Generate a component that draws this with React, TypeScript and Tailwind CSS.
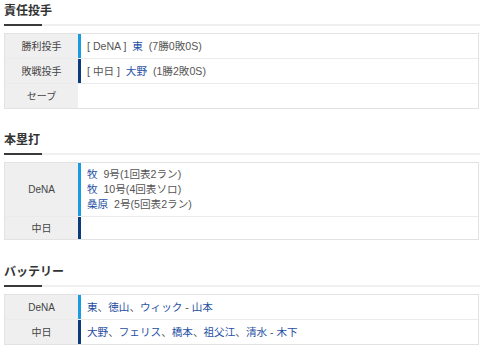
const BLUE = "border-[#1a9ae0]";
const NAVY = "border-[#0b3b7c]";

function Heading({ title }: { title: string }) {
  return (
    <div>
      <h2 className="h-[24px] pt-[1px] text-[12px] font-bold leading-[20px] text-[#333]">
        {title}
      </h2>
      <div className="flex h-[2px] bg-[#f0f0f0]">
        <div className="w-[38px] bg-[#3a3a3a]" />
      </div>
    </div>
  );
}

function Row({
  label,
  bar,
  first,
  empty,
  children,
}: {
  label: string;
  bar: string;
  first?: boolean;
  empty?: boolean;
  children?: React.ReactNode;
}) {
  return (
    <div className={`flex ${first ? "" : "border-t border-[#ebebeb]"}`}>
      <div className="flex w-[73px] shrink-0 items-center justify-center bg-[#efefef] text-[10px] text-[#444]">
        {label}
      </div>
      <div
        className={`${empty ? "h-[22px]" : "min-h-[24px]"} flex-1 border-l-[3px] ${bar} py-[4px] pl-[6px] text-[10.6px] leading-[16px] text-[#555]`}
      >
        {children}
      </div>
    </div>
  );
}

const Name = ({ children }: { children: React.ReactNode }) => (
  <span className="text-[#1f4fa3]">{children}</span>
);

export default function App() {
  return (
    <div
      className="h-[345px] w-[480px] overflow-hidden bg-white pl-[4px]"
      style={{ fontFamily: '"Liberation Sans", "Noto Sans CJK JP", sans-serif' }}
    >
      <Heading title="責任投手" />
      <div className="mr-[1px] mt-[7px] border border-[#e2e2e2]">
        <Row label="勝利投手" bar={BLUE} first>
          [ DeNA ]&nbsp; <Name>東</Name>&nbsp; (7勝0敗0S)
        </Row>
        <Row label="敗戦投手" bar={NAVY}>
          [ 中日 ]&nbsp; <Name>大野</Name>&nbsp; (1勝2敗0S)
        </Row>
        <Row label="セーブ" bar="border-transparent" />
      </div>

      <div className="mt-[20px]">
        <Heading title="本塁打" />
      </div>
      <div className="mr-[1px] mt-[7px] border border-[#e2e2e2]">
        <Row label="DeNA" bar={BLUE} first>
          <div className="leading-[15px]">
            <div>
              <Name>牧</Name>&nbsp; 9号(1回表2ラン)
            </div>
            <div>
              <Name>牧</Name>&nbsp; 10号(4回表ソロ)
            </div>
            <div>
              <Name>桑原</Name>&nbsp; 2号(5回表2ラン)
            </div>
          </div>
        </Row>
        <Row label="中日" bar={NAVY} empty />
      </div>

      <div className="mt-[21px]">
        <Heading title="バッテリー" />
      </div>
      <div className="mr-[1px] mt-[7px] border border-[#e2e2e2]">
        <Row label="DeNA" bar={BLUE} first>
          <Name>東</Name>、<Name>徳山</Name>、<Name>ウィック</Name> - <Name>山本</Name>
        </Row>
        <Row label="中日" bar={NAVY}>
          <Name>大野</Name>、<Name>フェリス</Name>、<Name>橋本</Name>、<Name>祖父江</Name>、
          <Name>清水</Name> - <Name>木下</Name>
        </Row>
      </div>
    </div>
  );
}
